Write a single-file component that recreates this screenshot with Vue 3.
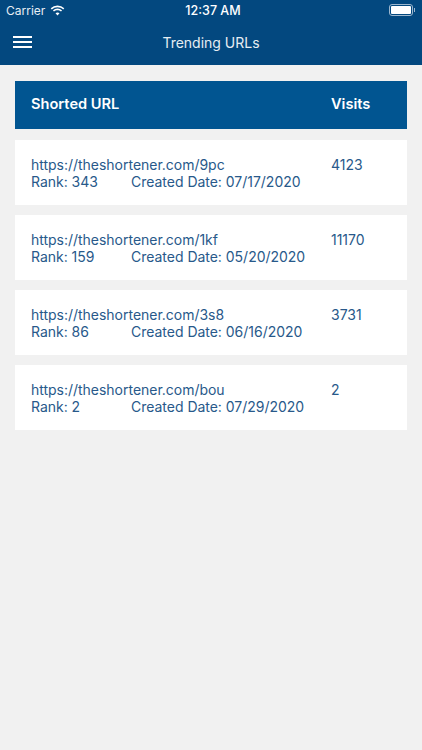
<script setup>
const rows = [
  { url: "https://theshortener.com/9pc", rank: 343, date: "07/17/2020", visits: 4123 },
  { url: "https://theshortener.com/1kf", rank: 159, date: "05/20/2020", visits: 11170 },
  { url: "https://theshortener.com/3s8", rank: 86, date: "06/16/2020", visits: 3731 },
  { url: "https://theshortener.com/bou", rank: 2, date: "07/29/2020", visits: 2 },
];
</script>

<template>
  <div class="screen">
    <header class="top">
      <div class="status">
        <div class="status-left">
          <span>Carrier</span>
          <svg width="15" height="11" viewBox="0 0 15 11">
            <path d="M7.5 2.2c2.2 0 4.2.8 5.7 2.2l1.1-1.2A9.9 9.9 0 0 0 7.5.5 9.900 9.900 0 0 0 .7 3.200l1.100 1.200a8.300 8.300 0 0 1 5.700-2.200z" fill="#fff" />
            <path d="M7.5 5.300c1.300 0 2.500.5 3.500 1.300l1.100-1.200a6.800 6.800 0 0 0-9.200 0L4 6.600c1-.8 2.200-1.300 3.500-1.300z" fill="#fff" />
            <path d="M7.500 7.400c-.8 0-1.400.3-2 .8l2 2.300 2-2.300c-.6-.5-1.200-.8-2-.8z" fill="#fff" />
          </svg>
        </div>
        <span class="clock">12:37 AM</span>
        <div class="battery"><div class="battery-fill"></div></div>
      </div>
      <nav class="bar">
        <button class="menu" aria-label="Menu">
          <span></span><span></span><span></span>
        </button>
        <span class="title">Trending URLs</span>
      </nav>
    </header>

    <main class="content">
      <div class="head">
        <span class="col-main">Shorted URL</span>
        <span class="col-visits">Visits</span>
      </div>
      <div v-for="row in rows" :key="row.url" class="row">
        <div class="col-main">
          <div>{{ row.url }}</div>
          <div class="meta">
            <span class="rank">Rank: {{ row.rank }}</span>
            <span>Created Date: {{ row.date }}</span>
          </div>
        </div>
        <div class="col-visits">{{ row.visits }}</div>
      </div>
    </main>
  </div>
</template>

<style>
body {
  margin: 0;
  background: #f1f1f1;
}
</style>

<style scoped>
.screen {
  width: 422px;
  height: 750px;
  overflow: hidden;
  display: flex;
  flex-direction: column;
  background: #f1f1f1;
  font-family: "Inter", "Liberation Sans", sans-serif;
}
.top {
  height: 65px;
  background: #03487f;
  color: #fff;
  flex: none;
}
.status {
  height: 20px;
  padding: 0 6px;
  display: flex;
  align-items: center;
  justify-content: space-between;
  position: relative;
  font-size: 12px;
  color: #e8eef4;
}
.status-left {
  display: flex;
  align-items: center;
  gap: 5px;
}
.clock {
  position: absolute;
  left: 4px;
  right: 0;
  text-align: center;
  font-size: 12.5px;
  font-weight: 500;
  color: #fff;
}
.battery {
  width: 20px;
  height: 8px;
  border: 1px solid #9db7ce;
  border-radius: 3px;
  padding: 1px;
  margin-right: 3px;
  position: relative;
  box-sizing: content-box;
}
.battery::after {
  content: "";
  position: absolute;
  right: -3px;
  top: 3px;
  width: 1px;
  height: 4px;
  background: #9db7ce;
}
.battery-fill {
  height: 100%;
  background: #fff;
  border-radius: 1px;
}
.bar {
  height: 45px;
  position: relative;
  display: flex;
  align-items: center;
  justify-content: center;
}
.title {
  font-size: 14px;
  color: #e6edf3;
}
.menu {
  position: absolute;
  left: 13px;
  top: 16px;
  width: 19px;
  padding: 0;
  border: 0;
  background: none;
  display: flex;
  flex-direction: column;
  gap: 3px;
}
.menu span {
  height: 2px;
  background: #fff;
}
.content {
  padding: 16px 15px;
  display: flex;
  flex-direction: column;
  gap: 10px;
}
.head {
  height: 48px;
  padding-bottom: 2px;
  box-sizing: border-box;
  display: flex;
  align-items: center;
  background: #015591;
  color: #fff;
  font-size: 14.6px;
  font-weight: 600;
  margin-bottom: 1px;
}
.row {
  height: 65px;
  padding-top: 16px;
  box-sizing: border-box;
  display: flex;
  background: #fff;
  color: #28598a;
  font-size: 14px;
  letter-spacing: -0.02px;
  line-height: 17px;
}
.col-main {
  flex: none;
  width: 316px;
  padding-left: 16px;
  box-sizing: border-box;
}
.meta {
  display: flex;
}
.rank {
  width: 100px;
}
</style>
